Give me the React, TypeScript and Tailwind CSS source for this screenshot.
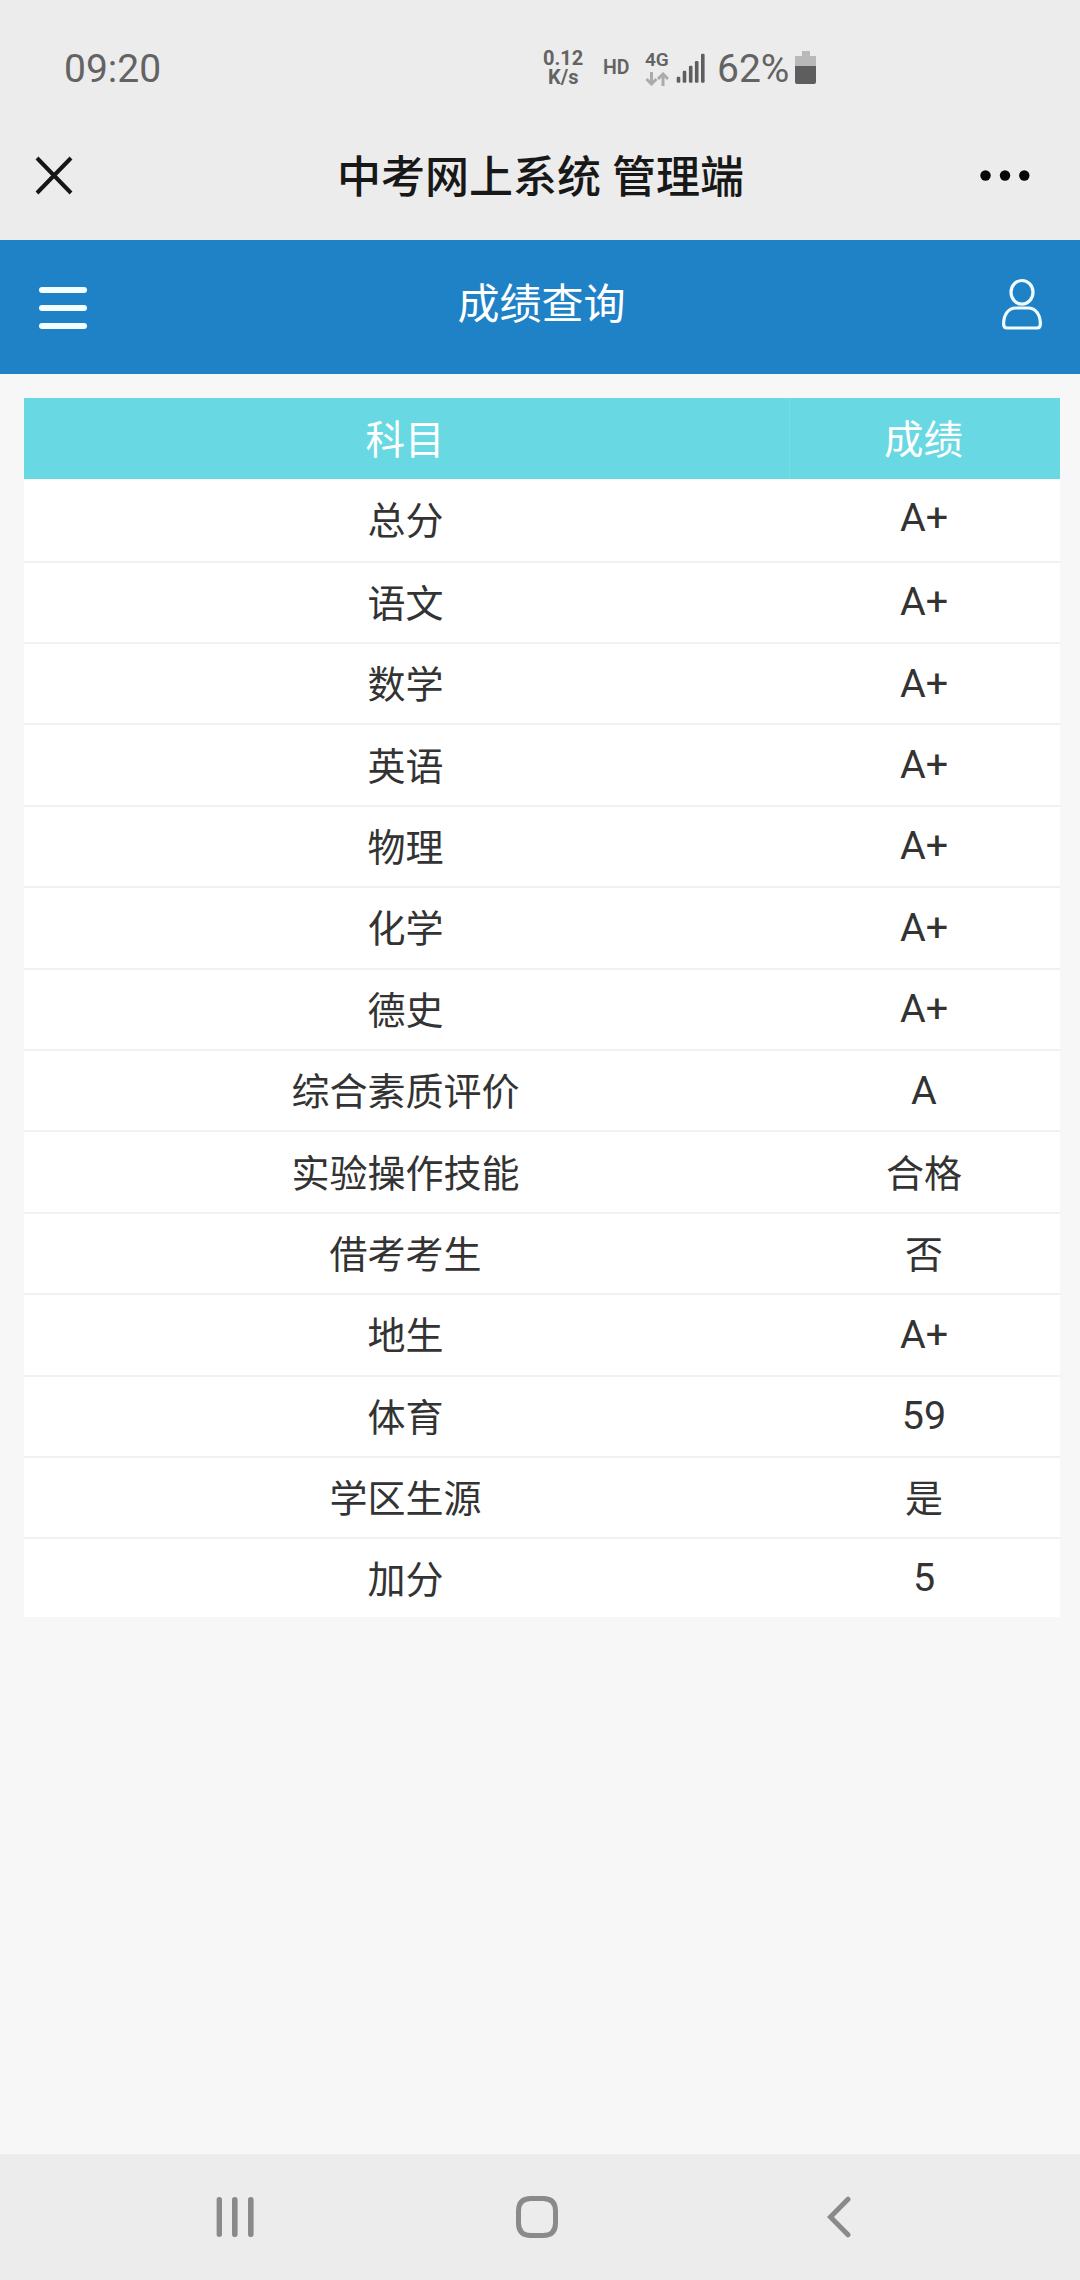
import React from "react";

const rows: [string, string][] = [
  ["总分", "A+"],
  ["语文", "A+"],
  ["数学", "A+"],
  ["英语", "A+"],
  ["物理", "A+"],
  ["化学", "A+"],
  ["德史", "A+"],
  ["综合素质评价", "A"],
  ["实验操作技能", "合格"],
  ["借考考生", "否"],
  ["地生", "A+"],
  ["体育", "59"],
  ["学区生源", "是"],
  ["加分", "5"],
];

function StatusBar() {
  return (
    <div className="flex h-[136px] items-center pl-[64px] text-[#636363]">
      <div className="w-[479px] pt-[2px] text-[39px] leading-[46px]">09:20</div>
      <div className="w-[60px] text-[20px] leading-[19px] font-bold">
        <div>0.12</div>
        <div className="pl-[5px]">K/s</div>
      </div>
      <div className="w-[42px] text-[19.5px] leading-[22px] font-semibold">HD</div>
      <div className="flex h-[36px] w-[31px] flex-col justify-between pt-[2px]">
        <div className="text-[19px] leading-[15px] font-semibold">4G</div>
        <svg className="-mt-[4px]" width="24" height="14" viewBox="0 0 24 14" fill="none" stroke="#ababab" strokeWidth="3">
          <path d="M6.5 0V11.5M1.5 7L6.5 12L11.5 7" />
          <path d="M18 14V2.5M13 7L18 2L23 7" />
        </svg>
      </div>
      <svg width="29" height="30" viewBox="0 0 29 30" fill="#5e5e5e">
        <rect x="0.7" y="23.7" width="3.6" height="6" rx="1.2" />
        <rect x="6.7" y="17.7" width="3.6" height="12" rx="1.2" />
        <rect x="12.9" y="12.7" width="3.6" height="17" rx="1.2" />
        <rect x="18.9" y="8" width="3.6" height="21.7" rx="1.2" />
        <rect x="25" y="0.7" width="3.6" height="29" rx="1.2" />
      </svg>
      <div className="w-[78px] pt-[2px] pl-[12px] text-[39px] leading-[46px]">62%</div>
      <svg className="-mt-[2px] ml-[12px]" width="22" height="34" viewBox="0 0 22 34">
        <path d="M7 1H15V6H21V16H0V6H7Z" fill="#b9b9b9" />
        <path d="M0 16H21V32Q21 34 19 34H2Q0 34 0 32Z" fill="#5e5e5e" />
      </svg>
    </div>
  );
}

function TitleBar() {
  return (
    <div className="grid h-[104px] grid-cols-[303px_1fr_100px] items-start">
      <svg className="mt-[20px] ml-[35px]" width="38" height="39" viewBox="0 0 38 39" fill="none" stroke="#161616" strokeWidth="4">
        <path d="M2 2L36 37M36 2L2 37" />
      </svg>
      <h1 className="mt-[10px] pl-[34px] text-[44px] leading-[64px] font-medium whitespace-nowrap text-[#181818]">
        中考网上系统 管理端
      </h1>
      <svg className="mt-[34px]" width="50" height="11" viewBox="0 0 50 11" fill="#080808">
        <circle cx="5.5" cy="5.5" r="5.2" />
        <circle cx="25" cy="5.5" r="5.2" />
        <circle cx="44.3" cy="5.5" r="5.2" />
      </svg>
    </div>
  );
}

function PageHeader() {
  return (
    <header className="flex h-[134px] items-start justify-between bg-[#1f82c7] pr-[37px] pl-[39px] text-white">
      <div className="mt-[47px] flex w-[48px] flex-col gap-[12px]">
        <span className="h-[6px] rounded-full bg-[#f4ffff]" />
        <span className="h-[6px] rounded-full bg-[#f4ffff]" />
        <span className="h-[6px] rounded-full bg-[#f4ffff]" />
      </div>
      <h2 className="mt-[35px] pr-[5px] text-[42px] leading-[60px]">成绩查询</h2>
      <svg className="mt-[38px]" width="42" height="52" viewBox="0 0 42 52" fill="none" stroke="#effbff" strokeWidth="3.2">
        <ellipse cx="21" cy="14.3" rx="11" ry="11.8" />
        <path d="M15 30H27C35 30 39.4 37 39.4 46Q39.4 50 36 50H6Q2.6 50 2.6 46C2.6 37 7 30 15 30Z" />
      </svg>
    </header>
  );
}

function ScoreTable() {
  return (
    <div className="mt-[24px] ml-[24px] w-[1036px]">
      <div className="flex h-[81px] bg-[#68d8e3] text-[39.5px] text-white">
        <div className="flex w-[766px] items-center justify-center border-r border-[#78dde6] pt-[5px] pr-[3px]">科目</div>
        <div className="flex flex-1 items-center justify-center pt-[5px] pr-[3px]">成绩</div>
      </div>
      {rows.map(([subject, score], i) => (
        <div
          key={subject}
          className={`flex bg-white text-[#333] ${i === 0 ? "h-[83.6px]" : i === rows.length - 1 ? "h-[78px]" : "h-[81.4px]"} ${
            i === rows.length - 1 ? "" : "border-b-2 border-[#f1f1f1]"
          }`}
        >
          <div className="flex w-[764px] items-center justify-center pt-[4px] pr-[1px] text-[38px]">{subject}</div>
          {/^[A-Z0-9+]+$/.test(score) ? (
            <div className={`flex flex-1 items-center justify-center text-[39.5px] ${i === 0 ? "pb-[4px]" : "pb-[1px]"}`}>{score}</div>
          ) : (
            <div className="flex flex-1 items-center justify-center pt-[4px] text-[38px]">{score}</div>
          )}
        </div>
      ))}
    </div>
  );
}

function NavBar() {
  return (
    <nav className="flex h-[126px] items-start bg-[#ececec] pt-[42px] pl-[216px]">
      <svg width="39" height="42" viewBox="0 0 39 42" fill="#8a8a8a">
        <rect x="0.6" y="1" width="5.4" height="40" rx="2.7" />
        <rect x="16" y="1" width="5.6" height="40" rx="2.8" />
        <rect x="32" y="1" width="5.6" height="40" rx="2.8" />
      </svg>
      <svg className="ml-[261px]" width="42" height="42" viewBox="0 0 42 42" fill="none" stroke="#8a8a8a" strokeWidth="5">
        <path d="M15 2.5H27C35.5 2.5 39.5 6.5 39.5 15V27C39.5 35.5 35.5 39.5 27 39.5H15C6.5 39.5 2.5 35.5 2.5 27V15C2.5 6.5 6.5 2.5 15 2.5Z" />
      </svg>
      <svg className="ml-[268px]" width="26" height="42" viewBox="0 0 26 42" fill="none" stroke="#8a8a8a" strokeWidth="5" strokeLinecap="round">
        <path d="M22 3.2L4.5 21L22 38.8" />
      </svg>
    </nav>
  );
}

export default function App() {
  return (
    <div className="flex h-[2280px] w-[1080px] flex-col overflow-hidden bg-[#f7f7f7] font-[Roboto,'Noto_Sans_CJK_SC',sans-serif]">
      <div className="bg-[#ececec]">
        <StatusBar />
        <TitleBar />
      </div>
      <PageHeader />
      <main className="flex-1">
        <ScoreTable />
      </main>
      <NavBar />
    </div>
  );
}
